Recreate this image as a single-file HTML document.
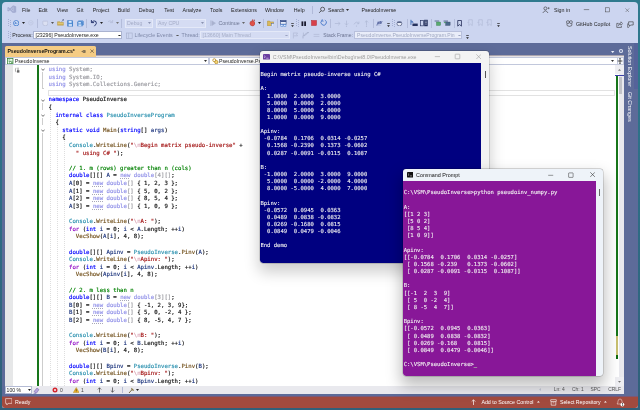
<!DOCTYPE html><html><head><meta charset="utf-8"><title>PseudoInverse</title><style>
*{box-sizing:border-box}
html,body{margin:0;padding:0}
body{width:640px;height:410px;overflow:hidden;position:relative;background:linear-gradient(to bottom,#2f7a8e 0%,#2e6d85 50%,#30607a 100%);font-family:"Liberation Sans",sans-serif;}
div,span.t,svg{position:absolute}
.t{white-space:pre;line-height:8px;font-family:"Liberation Sans",sans-serif;}
.m{font-family:"DejaVu Sans Mono","Liberation Mono",monospace;}
.code{-webkit-text-stroke:0.16px;font-family:"DejaVu Sans Mono","Liberation Mono",monospace;font-size:5.67px;line-height:7.61px;white-space:pre;color:#111;position:absolute;}
.code i{font-style:normal}
.k{color:#0000ff} .l{color:#8f08c4} .y{color:#2b91af} .f{color:#74531f} .s{color:#a31515} .e{color:#dba4b4}
.n{color:#8f8fe8;text-decoration:underline dotted #a8a8b8;text-decoration-thickness:0.5px;text-underline-offset:0.6px} .c{color:#008000} .v{color:#1f377f} .g{color:#9a9aa0} .h{color:#8f8fe8}
.con{-webkit-text-stroke:0.1px;font-family:"DejaVu Sans Mono","Liberation Mono",monospace;white-space:pre;position:absolute;color:#f2f2f2;margin:0}
</style></head><body><div id="root" style="left:0;top:0;width:640px;height:410px;will-change:transform">
<div id="vs" style="left:2px;top:2px;width:636px;height:406px;background:#ccd5f0;border-radius:4px 4px 2px 2px;overflow:hidden"></div>
<div style="left:2px;top:43px;width:636px;height:354px;background:#5d6b99;"></div>
<div style="left:2px;top:396px;width:636px;height:1px;background:#7c5876;"></div>
<div style="left:2px;top:397px;width:636px;height:10.7px;background:#a24a3e;border-radius:0 0 3px 3px;"></div>
<svg style="left:6.6px;top:4.8px" width="10" height="8.6" viewBox="0 0 10 9"><path d="M6.3 0.3 L9.4 1.5 L9.4 7.5 L6.3 8.7 Z M6.6 2.7 L6.6 6.3 L4.3 4.5 Z" fill="#a4add2" fill-rule="evenodd"/><path d="M0.9 2.7 L6.5 7.9 M0.9 6.3 L6.5 1.1" stroke="#a4add2" stroke-width="1.5" fill="none"/><path d="M0.7 2.6 L0.7 6.4" stroke="#a4add2" stroke-width="0.9"/></svg>
<span class="t" style="left:22px;top:6.00px;font-size:5.3px;color:#1e1e1e;">File</span>
<span class="t" style="left:38.4px;top:6.00px;font-size:5.3px;color:#1e1e1e;">Edit</span>
<span class="t" style="left:56.8px;top:6.00px;font-size:5.3px;color:#1e1e1e;">View</span>
<span class="t" style="left:76.6px;top:6.00px;font-size:5.3px;color:#1e1e1e;">Git</span>
<span class="t" style="left:92.7px;top:6.00px;font-size:5.3px;color:#1e1e1e;">Project</span>
<span class="t" style="left:117.8px;top:6.00px;font-size:5.3px;color:#1e1e1e;">Build</span>
<span class="t" style="left:138.7px;top:6.00px;font-size:5.3px;color:#1e1e1e;">Debug</span>
<span class="t" style="left:164.3px;top:6.00px;font-size:5.3px;color:#1e1e1e;">Test</span>
<span class="t" style="left:182.6px;top:6.00px;font-size:5.3px;color:#1e1e1e;">Analyze</span>
<span class="t" style="left:210px;top:6.00px;font-size:5.3px;color:#1e1e1e;">Tools</span>
<span class="t" style="left:231px;top:6.00px;font-size:5.3px;color:#1e1e1e;">Extensions</span>
<span class="t" style="left:265px;top:6.00px;font-size:5.3px;color:#1e1e1e;">Window</span>
<span class="t" style="left:293.7px;top:6.00px;font-size:5.3px;color:#1e1e1e;">Help</span>
<div style="left:312px;top:6px;width:1px;height:8px;background:#b0b9d8;"></div>
<svg style="left:318px;top:6px" width="8" height="8" viewBox="0 0 8 8"><circle cx="4.6" cy="3.2" r="2" fill="none" stroke="#333" stroke-width="0.7"/><path d="M3.2 4.7 L1.2 6.8" stroke="#333" stroke-width="0.8"/></svg>
<span class="t" style="left:328px;top:5.60px;font-size:5.2px;color:#1e1e1e;">Search</span>
<svg style="left:345.50px;top:9.05px" width="3" height="1.9" viewBox="0 0 3 1.9"><polygon points="0,0 3,0 1.5,1.9" fill="#333"/></svg>
<span class="t" style="left:361.5px;top:6.00px;font-size:5.2px;color:#1e1e1e;">PseudoInverse</span>
<svg style="left:542px;top:6px" width="8" height="8" viewBox="0 0 8 8"><circle cx="3.4" cy="2.4" r="1.5" fill="none" stroke="#333" stroke-width="0.6"/><path d="M0.8 7 Q3.4 2.6 6 7" fill="none" stroke="#333" stroke-width="0.6"/><path d="M5.6 2.2 L7.6 2.2 M6.6 1.2 L6.6 3.2" stroke="#333" stroke-width="0.5"/></svg>
<span class="t" style="left:553.9px;top:6.00px;font-size:5.3px;color:#1e1e1e;">Sign in</span>
<svg style="left:582px;top:5px" width="30" height="10" viewBox="0 0 30 10"><path d="M1.8 4.6 L7.2 4.6" stroke="#444" stroke-width="0.55"/><rect x="23.4" y="2.8" width="4.3" height="4.1" fill="none" stroke="#444" stroke-width="0.5"/></svg>
<svg style="left:625.2px;top:7.6px" width="4.6" height="4.6" viewBox="0 0 6 6"><path d="M0.5 0.5 L5.5 5.5 M5.5 0.5 L0.5 5.5" stroke="#444" stroke-width="0.55"/></svg>
<svg style="left:7.5px;top:18.5px" width="3" height="9" viewBox="0 0 3 9"><g fill="#a5afd3"><rect x="0" y="0" width="1" height="1"/><rect x="2" y="1" width="1" height="1"/><rect x="0" y="2" width="1" height="1"/><rect x="2" y="3" width="1" height="1"/><rect x="0" y="4" width="1" height="1"/><rect x="2" y="5" width="1" height="1"/><rect x="0" y="6" width="1" height="1"/><rect x="2" y="7" width="1" height="1"/></g></svg>
<svg style="left:12.8px;top:19.7px" width="6.4" height="6.4" viewBox="0 0 8 8"><circle cx="4" cy="4" r="3.3" fill="#dce8fb" stroke="#3f78cc" stroke-width="1.1"/><path d="M5.8 4 L2.4 4 M3.8 2.6 L2.4 4 L3.8 5.4" stroke="#2a63c0" stroke-width="0.8" fill="none"/></svg>
<svg style="left:22.00px;top:22.15px" width="3" height="1.9" viewBox="0 0 3 1.9"><polygon points="0,0 3,0 1.5,1.9" fill="#222"/></svg>
<svg style="left:28.2px;top:20.2px" width="5.6" height="5.6" viewBox="0 0 8 8"><circle cx="4" cy="4" r="3.2" fill="none" stroke="#bcc4de" stroke-width="0.9"/><path d="M2.4 4 L5.6 4" stroke="#b4bcd8" stroke-width="0.8"/></svg>
<div style="left:37.3px;top:18.5px;width:1px;height:9px;background:#b3bcda;"></div>
<svg style="left:41.6px;top:19.6px" width="6.6" height="6.6" viewBox="0 0 8 8"><path d="M1 2 Q1 0.8 2.4 1.4 L5.6 1.4 Q7 0.8 7 2 L7 4.6 Q7 7 4 7 Q1 7 1 4.6 Z" fill="#dbe0f2" stroke="#b0b8d4" stroke-width="0.7"/></svg>
<svg style="left:51.00px;top:22.15px" width="3" height="1.9" viewBox="0 0 3 1.9"><polygon points="0,0 3,0 1.5,1.9" fill="#555"/></svg>
<svg style="left:56.6px;top:18.8px" width="7.4" height="7" viewBox="0 0 9 8"><path d="M0.6 7.4 L0.6 3 L3.4 3 L4.2 3.8 L7.8 3.8 L7.8 7.4 Z" fill="#d2b458" stroke="#b0903a" stroke-width="0.5"/><path d="M1 5 L7.6 5" stroke="#e8d48c" stroke-width="0.8"/><path d="M5.6 2.8 L8 0.6 M6.6 0.5 L8.2 0.5 L8.2 2" fill="none" stroke="#4a5680" stroke-width="0.7"/></svg>
<svg style="left:66.8px;top:19.9px" width="6.6" height="6.8" viewBox="0 0 8 8"><path d="M0.6 0.6 L6.4 0.6 L7.4 1.6 L7.4 7.4 L0.6 7.4 Z" fill="#4d8ad2" stroke="#3a74c0" stroke-width="0.6"/><rect x="2" y="0.9" width="3.6" height="2.4" fill="#dce9fb"/><rect x="2" y="4.6" width="4" height="2.8" fill="#c4dbf7"/></svg>
<svg style="left:76.6px;top:19.9px" width="7" height="6.8" viewBox="0 0 9 8"><path d="M2 0.5 L7.6 0.5 L8.5 1.4 L8.5 6 L2 6 Z" fill="#6a9fdc" stroke="#4a82c8" stroke-width="0.5"/><path d="M0.5 2 L6 2 L7 3 L7 7.5 L0.5 7.5 Z" fill="#5a92d6" stroke="#3a74c0" stroke-width="0.5"/><rect x="1.8" y="2.3" width="3.2" height="1.8" fill="#dce9fb"/><rect x="1.8" y="5.2" width="3.8" height="2.3" fill="#c4dbf7"/></svg>
<div style="left:86.3px;top:18.5px;width:1px;height:9px;background:#b3bcda;"></div>
<svg style="left:89.5px;top:19px" width="8" height="8" viewBox="0 0 8 8"><path d="M1.4 1 L1.4 3.6 L4 3.6" fill="none" stroke="#1b2a66" stroke-width="0.9"/><path d="M1.6 3.4 Q4 0.6 6 2.6 Q7.4 4.6 4.4 7.2" fill="none" stroke="#1b2a66" stroke-width="0.9"/></svg>
<svg style="left:100.00px;top:22.15px" width="3" height="1.9" viewBox="0 0 3 1.9"><polygon points="0,0 3,0 1.5,1.9" fill="#222"/></svg>
<svg style="left:105.5px;top:19px" width="8" height="8" viewBox="0 0 8 8"><path d="M6.6 1 L6.6 3.6 L4 3.6" fill="none" stroke="#b4bcd8" stroke-width="0.8"/><path d="M6.4 3.4 Q4 0.6 2 2.6" fill="none" stroke="#b4bcd8" stroke-width="0.8"/></svg>
<svg style="left:115.70px;top:22.15px" width="3" height="1.9" viewBox="0 0 3 1.9"><polygon points="0,0 3,0 1.5,1.9" fill="#777"/></svg>
<div style="left:121.2px;top:18.5px;width:1px;height:9px;background:#b3bcda;"></div>
<div style="left:124.5px;top:18.5px;width:28.5px;height:9.4px;background:#d5dcf3;border:1px solid #e4e9f8;"></div>
<span class="t" style="left:127px;top:19.20px;font-size:5.2px;color:#a3abc6;">Debug</span>
<svg style="left:148.00px;top:22.15px" width="3" height="1.9" viewBox="0 0 3 1.9"><polygon points="0,0 3,0 1.5,1.9" fill="#8a92b0"/></svg>
<div style="left:155.5px;top:18.5px;width:50px;height:9.4px;background:#d5dcf3;border:1px solid #e4e9f8;"></div>
<span class="t" style="left:158px;top:19.20px;font-size:5.2px;color:#a3abc6;">Any CPU</span>
<svg style="left:200.50px;top:22.15px" width="3" height="1.9" viewBox="0 0 3 1.9"><polygon points="0,0 3,0 1.5,1.9" fill="#8a92b0"/></svg>
<svg style="left:209.5px;top:19.6px" width="6" height="6.5" viewBox="0 0 6 6.5"><path d="M0.6 0.4 L0.6 6 M1.8 0.8 L5.4 3.2 L1.8 5.6 Z" fill="#a9b2cf" stroke="#a9b2cf" stroke-width="0.6"/></svg>
<span class="t" style="left:218.5px;top:19.20px;font-size:5.3px;color:#6f7894;">Continue</span>
<svg style="left:242.00px;top:22.15px" width="3" height="1.9" viewBox="0 0 3 1.9"><polygon points="0,0 3,0 1.5,1.9" fill="#666"/></svg>
<svg style="left:248.6px;top:19.2px" width="6.8" height="7.6" viewBox="0 0 8 9"><path d="M4.2 0.6 Q4.6 2.2 6.2 3 Q7.6 4.4 6.8 6.4 Q5.8 8.4 3.8 8.2 Q1.2 7.8 1 5.2 Q1 3.4 2.6 2.4 Q2.6 3.6 3.4 3.6 Q3.2 1.8 4.2 0.6Z" fill="#e0524a" stroke="#a02a22" stroke-width="0.5"/><path d="M5.4 0.8 L7.4 1 L6.4 2.4Z" fill="#a02a22"/></svg>
<svg style="left:257.80px;top:22.15px" width="3" height="1.9" viewBox="0 0 3 1.9"><polygon points="0,0 3,0 1.5,1.9" fill="#222"/></svg>
<div style="left:263px;top:18.5px;width:1px;height:9px;background:#b3bcda;"></div>
<svg style="left:266.6px;top:19.6px" width="7.6" height="6.8" viewBox="0 0 9 8"><path d="M0.6 7 L0.6 1.2 L3.2 1.2 L4 2.2 L7.8 2.2 L7.8 7 Z" fill="#d9b95c" stroke="#a8862a" stroke-width="0.5"/><rect x="5" y="4" width="3.4" height="3.4" fill="#dfe7fa" stroke="#40589a" stroke-width="0.5"/></svg>
<div style="left:277px;top:18.5px;width:1px;height:9px;background:#b3bcda;"></div>
<svg style="left:280.4px;top:19.8px" width="6.6" height="7" viewBox="0 0 8 8"><rect x="0.6" y="0.6" width="6.8" height="4.2" fill="#e6edfb" stroke="#28407e" stroke-width="0.7"/><rect x="0.6" y="0.6" width="6.8" height="1.4" fill="#28407e"/><rect x="1" y="5.4" width="2.6" height="2.2" fill="#e6edfb" stroke="#3c79cf" stroke-width="0.6"/><rect x="4.6" y="5.4" width="2.6" height="2.2" fill="#e6edfb" stroke="#3c79cf" stroke-width="0.6"/></svg>
<svg style="left:290.6px;top:23.2px" width="3" height="4.4" viewBox="0 0 3 4.4"><rect x="0.2" y="0" width="2.6" height="0.7" fill="#222"/><polygon points="0.1,2.2 2.9,2.2 1.5,3.9" fill="#222"/></svg>
<svg style="left:295.6px;top:18.5px" width="3" height="9" viewBox="0 0 3 9"><g fill="#a5afd3"><rect x="0" y="0" width="1" height="1"/><rect x="2" y="1" width="1" height="1"/><rect x="0" y="2" width="1" height="1"/><rect x="2" y="3" width="1" height="1"/><rect x="0" y="4" width="1" height="1"/><rect x="2" y="5" width="1" height="1"/><rect x="0" y="6" width="1" height="1"/><rect x="2" y="7" width="1" height="1"/></g></svg>
<svg style="left:301px;top:20.6px" width="6" height="5.6" viewBox="0 0 6 5.6"><rect x="0.5" y="0.4" width="1.8" height="4.8" fill="#1b1b2f"/><rect x="3.2" y="0.4" width="1.8" height="4.8" fill="#1b1b2f"/></svg>
<svg style="left:311px;top:20.4px" width="6" height="6" viewBox="0 0 6 6"><rect x="0.5" y="0.5" width="5" height="5" fill="#d8404a" stroke="#b02830" stroke-width="0.5"/></svg>
<svg style="left:320px;top:19.4px" width="7.2" height="7.2" viewBox="0 0 8 8"><path d="M5.4 1.2 A3 3 0 1 1 2.2 1.6" fill="none" stroke="#2a63c0" stroke-width="0.8"/><path d="M2.6 0.2 L2 2.2 L4 2.4" fill="none" stroke="#2a63c0" stroke-width="0.7"/></svg>
<div style="left:330.3px;top:18.5px;width:1px;height:9px;background:#b3bcda;"></div>
<svg style="left:333.5px;top:19.5px" width="7" height="7" viewBox="0 0 7 7"><path d="M0.8 3.5 L6 3.5 M4.2 1.7 L6 3.5 L4.2 5.3" fill="none" stroke="#aeb7d4" stroke-width="0.7"/></svg>
<svg style="left:343px;top:19.5px" width="7" height="7" viewBox="0 0 7 7"><path d="M3.5 0.6 L3.5 5 M1.9 3.4 L3.5 5 L5.1 3.4" fill="none" stroke="#aeb7d4" stroke-width="0.7"/><circle cx="3.5" cy="6.2" r="0.6" fill="#aeb7d4"/></svg>
<svg style="left:352.5px;top:19.5px" width="7" height="7" viewBox="0 0 7 7"><path d="M1 4.4 Q3.4 0.4 5.8 3.6 M5.9 1.6 L5.9 3.7 L3.9 3.7" fill="none" stroke="#aeb7d4" stroke-width="0.7"/><circle cx="3.5" cy="6" r="0.6" fill="#aeb7d4"/></svg>
<svg style="left:362.5px;top:19.5px" width="7" height="7" viewBox="0 0 7 7"><path d="M3.5 5.2 L3.5 0.8 M1.9 2.4 L3.5 0.8 L5.1 2.4" fill="none" stroke="#aeb7d4" stroke-width="0.7"/><circle cx="3.5" cy="6.2" r="0.6" fill="#aeb7d4"/></svg>
<div style="left:372.8px;top:18.5px;width:1px;height:9px;background:#b3bcda;"></div>
<svg style="left:376.2px;top:19.6px" width="6.8" height="6.8" viewBox="0 0 8 8"><path d="M1 6.4 L2.6 2 L3.4 5 L5 1.2 L5.6 4.6 L7.2 1.2" fill="none" stroke="#3a4a8a" stroke-width="0.8"/><path d="M0.6 7.4 L6 7.4" stroke="#3a4a8a" stroke-width="0.5"/></svg>
<svg style="left:386.5px;top:22.8px" width="3" height="4.4" viewBox="0 0 3 4.4"><rect x="0.2" y="0" width="2.6" height="0.7" fill="#222"/><polygon points="0.1,2.2 2.9,2.2 1.5,3.9" fill="#222"/></svg>
<svg style="left:391.5px;top:18.5px" width="3" height="9" viewBox="0 0 3 9"><g fill="#a5afd3"><rect x="0" y="0" width="1" height="1"/><rect x="2" y="1" width="1" height="1"/><rect x="0" y="2" width="1" height="1"/><rect x="2" y="3" width="1" height="1"/><rect x="0" y="4" width="1" height="1"/><rect x="2" y="5" width="1" height="1"/><rect x="0" y="6" width="1" height="1"/><rect x="2" y="7" width="1" height="1"/></g></svg>
<svg style="left:396.4px;top:19.6px" width="6.8" height="6.8" viewBox="0 0 8 8"><ellipse cx="4" cy="3" rx="3" ry="1.6" fill="#5a6488"/><path d="M1 3.6 Q1 7 4 7 Q7 7 7 3.6" fill="#e8ecf8" stroke="#3a4266" stroke-width="0.7"/></svg>
<div style="left:406.8px;top:18.5px;width:1px;height:9px;background:#b3bcda;"></div>
<svg style="left:409.5px;top:19px" width="8.5" height="8" viewBox="0 0 9 8"><path d="M1 0.6 L1 6" stroke="#1f55a8" stroke-width="0.8"/><path d="M1.6 1.4 L4 3.4 L1.6 3.6Z" fill="#1f55a8"/><rect x="2.6" y="4.6" width="5.6" height="2.6" fill="#26325e"/></svg>
<svg style="left:420px;top:19px" width="8.5" height="8" viewBox="0 0 9 8"><rect x="0.6" y="1.4" width="3" height="5.6" fill="none" stroke="#26325e" stroke-width="0.7"/><rect x="4.4" y="0.6" width="3.8" height="6.8" fill="#26325e"/><path d="M5.2 2 L7.4 2 M5.2 3.6 L7.4 3.6 M5.2 5.2 L7.4 5.2" stroke="#dfe7fa" stroke-width="0.5"/></svg>
<div style="left:430.6px;top:18.5px;width:1px;height:9px;background:#b3bcda;"></div>
<svg style="left:433.5px;top:20px" width="7.4" height="6.4" viewBox="0 0 8 7"><rect x="0.6" y="0.6" width="5" height="1" fill="#5a6a90"/><rect x="2.6" y="2.2" width="4.6" height="3.8" fill="#58aa70" stroke="#3a7a4a" stroke-width="0.4"/></svg>
<svg style="left:442.6px;top:20px" width="8" height="6.4" viewBox="0 0 9 7"><rect x="0.6" y="0.6" width="5" height="1" fill="#4a5a80"/><rect x="3" y="2.2" width="5" height="3.8" fill="#4a6a8a" stroke="#2a3a5a" stroke-width="0.4"/><rect x="1" y="2.4" width="2" height="1" fill="#3e9a56"/></svg>
<div style="left:453.6px;top:18.5px;width:1px;height:9px;background:#b3bcda;"></div>
<svg style="left:457.4px;top:19.8px" width="5.2" height="6.8" viewBox="0 0 6 8"><path d="M0.8 0.6 L5.2 0.6 L5.2 7.2 L3 5.4 L0.8 7.2 Z" fill="none" stroke="#1b2350" stroke-width="0.9"/></svg>
<svg style="left:467px;top:19.4px" width="7" height="7.5" viewBox="0 0 7 8"><path d="M1.6 0.8 L5.4 0.8 L5.4 7 L3.5 5.4 L1.6 7 Z" fill="none" stroke="#b0b9d6" stroke-width="0.7"/><path d="M0 3.6 L2 3.6" stroke="#b0b9d6" stroke-width="0.6"/></svg>
<svg style="left:476.5px;top:19.4px" width="7" height="7.5" viewBox="0 0 7 8"><path d="M1.6 0.8 L5.4 0.8 L5.4 7 L3.5 5.4 L1.6 7 Z" fill="none" stroke="#b0b9d6" stroke-width="0.7"/><path d="M0 3.6 L2 3.6" stroke="#b0b9d6" stroke-width="0.6"/></svg>
<svg style="left:486px;top:19.4px" width="7" height="7.5" viewBox="0 0 7 8"><path d="M1.6 0.8 L5.4 0.8 L5.4 7 L3.5 5.4 L1.6 7 Z" fill="none" stroke="#b0b9d6" stroke-width="0.7"/><path d="M0 3.6 L2 3.6" stroke="#b0b9d6" stroke-width="0.6"/></svg>
<svg style="left:496.5px;top:22.8px" width="3" height="4.4" viewBox="0 0 3 4.4"><rect x="0.2" y="0" width="2.6" height="0.7" fill="#222"/><polygon points="0.1,2.2 2.9,2.2 1.5,3.9" fill="#222"/></svg>
<svg style="left:566px;top:19.6px" width="7" height="7" viewBox="0 0 7 7"><rect x="0.6" y="0.8" width="2.6" height="2.6" rx="0.8" fill="none" stroke="#333" stroke-width="0.6"/><rect x="3.6" y="0.8" width="2.6" height="2.6" rx="0.8" fill="none" stroke="#333" stroke-width="0.6"/><path d="M0.8 3.6 Q0.4 6.4 3.4 6.4 Q6.6 6.4 6 3.6" fill="none" stroke="#333" stroke-width="0.6"/></svg>
<span class="t" style="left:576px;top:19.80px;font-size:5.25px;color:#1e1e1e;">GitHub Copilot</span>
<svg style="left:615.5px;top:20.5px" width="7" height="7" viewBox="0 0 7 7"><path d="M2.6 2.4 L0.8 2.4 L0.8 6.4 L5.4 6.4 L5.4 4.8" fill="none" stroke="#333" stroke-width="0.6"/><path d="M2.4 4.6 Q2.8 2 5 2 L5 0.8 L6.6 2.6 L5 4.2 L5 3.2 Q3.4 3.2 2.4 4.6Z" fill="none" stroke="#333" stroke-width="0.5"/></svg>
<svg style="left:626.5px;top:20.5px" width="7" height="7" viewBox="0 0 7 7"><path d="M1.6 0.8 L6.2 0.8 L6.2 4 L3.6 4 L2.4 5.4 L2.4 4 L1.6 4Z" fill="none" stroke="#333" stroke-width="0.6"/><path d="M0.6 2.4 L0.6 6.4 L2 6.4" fill="none" stroke="#333" stroke-width="0.5"/></svg>
<svg style="left:7.5px;top:31px" width="3" height="9" viewBox="0 0 3 9"><g fill="#a5afd3"><rect x="0" y="0" width="1" height="1"/><rect x="2" y="1" width="1" height="1"/><rect x="0" y="2" width="1" height="1"/><rect x="2" y="3" width="1" height="1"/><rect x="0" y="4" width="1" height="1"/><rect x="2" y="5" width="1" height="1"/><rect x="0" y="6" width="1" height="1"/><rect x="2" y="7" width="1" height="1"/></g></svg>
<span class="t" style="left:12.2px;top:31.40px;font-size:5.25px;color:#1e1e1e;">Process:</span>
<div style="left:33.2px;top:30.8px;width:88.8px;height:8.6px;background:#ffffff;border:0.5px solid #aab3d0;"></div>
<span class="t" style="left:35.5px;top:31.30px;font-size:5.2px;color:#1e1e1e;">[23296] PseudoInverse.exe</span>
<svg style="left:117.50px;top:34.55px" width="3" height="1.9" viewBox="0 0 3 1.9"><polygon points="0,0 3,0 1.5,1.9" fill="#222"/></svg>
<svg style="left:125.5px;top:31.5px" width="7" height="7" viewBox="0 0 7 7"><rect x="0.6" y="1" width="5.6" height="5.4" fill="none" stroke="#a9b2cf" stroke-width="0.7"/><path d="M2.6 1 L2.6 6.4" stroke="#a9b2cf" stroke-width="0.6"/></svg>
<span class="t" style="left:134.5px;top:31.30px;font-size:5.3px;color:#7e88a8;">Lifecycle Events</span>
<svg style="left:175.50px;top:34.55px" width="3" height="1.9" viewBox="0 0 3 1.9"><polygon points="0,0 3,0 1.5,1.9" fill="#555"/></svg>
<span class="t" style="left:181.5px;top:31.30px;font-size:5.25px;color:#7e88a8;">Thread:</span>
<div style="left:200px;top:30.8px;width:89.5px;height:8.6px;background:#d5dcf3;border:1px solid #e4e9f8;"></div>
<span class="t" style="left:202.5px;top:31.30px;font-size:5.25px;color:#a7afc8;">[13660] Main Thread</span>
<svg style="left:285.00px;top:34.55px" width="3" height="1.9" viewBox="0 0 3 1.9"><polygon points="0,0 3,0 1.5,1.9" fill="#9aa2c0"/></svg>
<svg style="left:292px;top:31.8px" width="7" height="7" viewBox="0 0 7 7"><path d="M1.4 0.6 L1.4 6.4 M1.8 1 L5.6 1 L4.6 2.4 L5.6 3.8 L1.8 3.8" fill="none" stroke="#b0b9d6" stroke-width="0.7"/></svg>
<svg style="left:301.5px;top:31.8px" width="8" height="7" viewBox="0 0 8 7"><path d="M1 6.4 L1 3.6 L3 3.6 L3 2 L5 2 L5 0.6 L7 0.6" fill="none" stroke="#a4adca" stroke-width="0.8"/><path d="M1.4 0.6 L1.4 3" stroke="#a4adca" stroke-width="0.6"/></svg>
<svg style="left:312.5px;top:32.5px" width="7" height="6" viewBox="0 0 7 6"><path d="M0.6 1.4 L6.4 1.4 M0.6 3.4 L6.4 3.4" stroke="#b0b9d6" stroke-width="0.7"/></svg>
<span class="t" style="left:323.2px;top:31.30px;font-size:5.0px;color:#6a7290;">Stack Frame:</span>
<div style="left:354.2px;top:30.8px;width:108px;height:8.6px;background:#e9edf9;border:0.6px solid #b8c0dc;"></div>
<span class="t" style="left:357px;top:31.30px;font-size:5.1px;color:#a0a8c2;">PseudoInverse.PseudoInverseProgram.Pin</span>
<svg style="left:458.00px;top:34.55px" width="3" height="1.9" viewBox="0 0 3 1.9"><polygon points="0,0 3,0 1.5,1.9" fill="#9aa2c0"/></svg>
<svg style="left:465.5px;top:35.0px" width="3" height="4.4" viewBox="0 0 3 4.4"><rect x="0.2" y="0" width="2.6" height="0.7" fill="#222"/><polygon points="0.1,2.2 2.9,2.2 1.5,3.9" fill="#222"/></svg>
<div style="left:5px;top:46px;width:91.3px;height:10.8px;background:#f5cc84;border-radius:1.5px 1.5px 0 0;"></div>
<span class="t" style="left:7.4px;top:47.20px;font-size:5.2px;color:#111;font-weight:bold;">PseudoInverseProgram.cs*</span>
<svg style="left:81.2px;top:49px" width="5" height="5" viewBox="0 0 6 6"><path d="M0.6 3 L2.6 3 M2.6 1.4 L2.6 4.6 M2.6 2 L4.6 2 L4.6 4 L2.6 4 M4.8 1.2 L4.8 4.8" stroke="#333" stroke-width="0.6" fill="none"/></svg>
<svg style="left:89.6px;top:49.4px" width="4.2" height="4.2" viewBox="0 0 5 5"><path d="M0.5 0.5 L4.5 4.5 M4.5 0.5 L0.5 4.5" stroke="#4a4030" stroke-width="0.7"/></svg>
<svg style="left:611.30px;top:50.55px" width="3.4" height="2.1" viewBox="0 0 3.4 2.1"><polygon points="0,0 3.4,0 1.7,2.1" fill="#eef1fa"/></svg>
<svg style="left:618px;top:48px" width="6" height="6" viewBox="0 0 6 6"><circle cx="3" cy="3" r="1.5" fill="none" stroke="#dfe4f3" stroke-width="1.1"/></svg>
<span class="t" style="left:625.5px;top:45.5px;font-size:5.35px;color:#fff;writing-mode:vertical-rl;line-height:8px;">Solution Explorer</span>
<span class="t" style="left:625.5px;top:92.3px;font-size:5.35px;color:#fff;writing-mode:vertical-rl;line-height:8px;">Git Changes</span>
<div style="left:634px;top:43px;width:4px;height:46px;background:#55639a;"></div>
<div style="left:96px;top:55px;width:528px;height:1px;background:#aaa4ae;"></div>
<div style="left:96px;top:56px;width:528px;height:1px;background:#e6e2e4;"></div>
<div style="left:5px;top:56.6px;width:619px;height:8.6px;background:#ffffff;"></div>
<div style="left:5px;top:56.6px;width:204px;height:8.6px;background:#fff;border:0.5px solid #c2c8dc;"></div>
<svg style="left:7px;top:57.8px" width="6.5" height="6.5" viewBox="0 0 7 7"><rect x="0.6" y="0.6" width="5.8" height="5.8" fill="#f2fff2" stroke="#2d7d32" stroke-width="0.8"/><path d="M1.6 2 L3.4 2 M1.6 3.5 L5.2 3.5" stroke="#2d7d32" stroke-width="0.6"/><text x="2.2" y="6" font-size="3" fill="#2d7d32" font-family="Liberation Sans,sans-serif" font-weight="bold">C#</text></svg>
<span class="t" style="left:14.8px;top:56.90px;font-size:5.2px;color:#1e1e1e;">PseudoInverse</span>
<svg style="left:203.70px;top:60.05px" width="3" height="1.9" viewBox="0 0 3 1.9"><polygon points="0,0 3,0 1.5,1.9" fill="#333"/></svg>
<div style="left:209px;top:56.6px;width:206px;height:8.6px;background:#fff;border:0.5px solid #c2c8dc;"></div>
<svg style="left:211.5px;top:57.8px" width="7" height="6.5" viewBox="0 0 7 7"><circle cx="2.2" cy="2.4" r="1.6" fill="none" stroke="#b8860b" stroke-width="0.8"/><circle cx="4.4" cy="4.4" r="1.8" fill="#f5d87a" stroke="#a87a10" stroke-width="0.7"/></svg>
<span class="t" style="left:219px;top:56.90px;font-size:5.2px;color:#1e1e1e;">PseudoInverse.PseudoInverseProgram</span>
<div style="left:415px;top:56.6px;width:203px;height:8.6px;background:#fff;border:0.5px solid #c2c8dc;"></div>
<svg style="left:610.90px;top:60.05px" width="3" height="1.9" viewBox="0 0 3 1.9"><polygon points="0,0 3,0 1.5,1.9" fill="#333"/></svg>
<div style="left:617px;top:56.6px;width:7px;height:8.6px;background:#f6f7fb;border:0.5px solid #c2c8dc;"></div>
<svg style="left:617px;top:58px" width="6" height="6" viewBox="0 0 6 6"><path d="M3 0.4 L3 5.6 M0.6 3 L5.4 3" stroke="#2a2a2a" stroke-width="0.8" fill="none"/><path d="M3 0 L3.9 1.1 L2.1 1.1Z M3 6 L3.9 4.9 L2.1 4.9Z" fill="#2a2a2a"/></svg>
<div style="left:5px;top:65.2px;width:619px;height:321px;background:#ffffff;"></div>
<div style="left:5px;top:65.2px;width:7.6px;height:321px;background:#e6e7e8;"></div>
<div style="left:37px;top:65.2px;width:2.4px;height:321px;background:#17751a;"></div>
<div style="left:48px;top:89.6px;width:567px;height:6.4px;background:#fff;border:0.6px solid #e2e2e2;"></div>
<div style="left:619px;top:65.2px;width:5px;height:321px;background:#e9e9ee;"></div>
<div style="left:615px;top:65.2px;width:9px;height:9px;background:#eeeef2;"></div>
<div style="left:615px;top:377px;width:9px;height:9px;background:#eeeef2;"></div>
<svg style="left:618.00px;top:68.90px" width="3" height="1.8" viewBox="0 0 3 1.8"><polygon points="0,1.8 3,1.8 1.5,0" fill="#777"/></svg>
<svg style="left:618.00px;top:380.90px" width="3" height="1.8" viewBox="0 0 3 1.8"><polygon points="0,0 3,0 1.5,1.8" fill="#777"/></svg>
<div style="left:615.3px;top:75px;width:8.5px;height:1px;background:#3a3fa8;"></div>
<div style="left:615.6px;top:76px;width:2.6px;height:260px;background:#17751a;"></div>
<div style="left:615.6px;top:336px;width:2.6px;height:19px;background:#efe9a6;border:0.4px solid #c8c070;"></div>
<div style="left:615.8px;top:355px;width:2.4px;height:3.5px;background:#0e6a0e;"></div>
<div style="left:619.3px;top:77px;width:3px;height:17px;background:#c2c3c9;"></div>
<svg style="left:40.6px;top:68.15px" width="4" height="3.2" viewBox="0 0 4 3.2"><path d="M0.4 0.6 L2 2.4 L3.6 0.6" fill="none" stroke="#3a3a3a" stroke-width="0.7"/></svg>
<svg style="left:40.6px;top:98.59px" width="4" height="3.2" viewBox="0 0 4 3.2"><path d="M0.4 0.6 L2 2.4 L3.6 0.6" fill="none" stroke="#3a3a3a" stroke-width="0.7"/></svg>
<svg style="left:40.6px;top:113.81px" width="4" height="3.2" viewBox="0 0 4 3.2"><path d="M0.4 0.6 L2 2.4 L3.6 0.6" fill="none" stroke="#3a3a3a" stroke-width="0.7"/></svg>
<svg style="left:40.6px;top:129.03px" width="4" height="3.2" viewBox="0 0 4 3.2"><path d="M0.4 0.6 L2 2.4 L3.6 0.6" fill="none" stroke="#3a3a3a" stroke-width="0.7"/></svg>
<div style="left:42.4px;top:72.25px;width:0.5px;height:16.22px;background:#cdcdcd;"></div>
<div style="left:42.4px;top:87.97px;width:2px;height:0.5px;background:#cdcdcd;"></div>
<div style="left:42.4px;top:102.69px;width:0.5px;height:7px;background:#cdcdcd;"></div>
<div style="left:42.4px;top:117.91px;width:0.5px;height:7px;background:#cdcdcd;"></div>
<div style="left:42.4px;top:133.13px;width:0.5px;height:252.87px;background:#cdcdcd;"></div>
<div style="left:50.2px;top:104.00px;width:0;height:282.00px;border-left:0.6px dotted #dedede;"></div>
<div style="left:57.1px;top:119.22px;width:0;height:266.78px;border-left:0.6px dotted #dedede;"></div>
<div style="left:64.0px;top:134.44px;width:0;height:251.56px;border-left:0.6px dotted #dedede;"></div>
<svg style="left:14px;top:66.5px" width="7" height="7" viewBox="0 0 7 7"><path d="M2 0.8 Q0.6 3 2 5.2" fill="none" stroke="#555" stroke-width="0.5"/><path d="M4 0.6 L4 3.4" stroke="#444" stroke-width="0.6"/><rect x="3" y="3.2" width="2.4" height="2.4" fill="#666"/></svg>
<pre class="code" style="left:48.6px;top:65.94px;margin:0;width:566px;height:320.06px;overflow:hidden;letter-spacing:0px"><i class="h">using</i> <i class="g">System;</i>
<i class="h">using</i> <i class="g">System.IO;</i>
<i class="h">using</i> <i class="g">System.Collections.Generic;</i>

<i class="k">namespace</i> PseudoInverse
{
  <i class="k">internal</i> <i class="k">class</i> <i class="y">PseudoInverseProgram</i>
  {
    <i class="k">static</i> <i class="k">void</i> <i class="f">Main</i>(<i class="k">string</i>[] <i class="v">args</i>)
    {
      <i class="y">Console</i>.<i class="f">WriteLine</i>(<i class="s">"</i><i class="e">\n</i><i class="s">Begin matrix pseudo-inverse"</i> +
        <i class="s">" using C# "</i>);

      <i class="c">// 1. m (rows) greater than n (cols)</i>
      <i class="k">double</i>[][] <i class="v">A</i> = <i class="n">new</i><i class="h"> double</i><i class="g">[4][]</i>;
      <i class="v">A</i>[0] = <i class="n">new</i><i class="h"> double</i><i class="g">[]</i> { 1, 2, 3 };
      <i class="v">A</i>[1] = <i class="n">new</i><i class="h"> double</i><i class="g">[]</i> { 5, 0, 2 };
      <i class="v">A</i>[2] = <i class="n">new</i><i class="h"> double</i><i class="g">[]</i> { 8, 5, 4 };
      <i class="v">A</i>[3] = <i class="n">new</i><i class="h"> double</i><i class="g">[]</i> { 1, 0, 9 };

      <i class="y">Console</i>.<i class="f">WriteLine</i>(<i class="s">"</i><i class="e">\n</i><i class="s">A: "</i>);
      <i class="l">for</i> (<i class="k">int</i> <i class="v">i</i> = 0; <i class="v">i</i> &lt; <i class="v">A</i>.Length; ++<i class="v">i</i>)
        <i class="f">VecShow</i>(<i class="v">A</i>[<i class="v">i</i>], 4, 8);

      <i class="k">double</i>[][] <i class="v">Apinv</i> = <i class="y">PseudoInverse</i>.<i class="f">Pinv</i>(<i class="v">A</i>);
      <i class="y">Console</i>.<i class="f">WriteLine</i>(<i class="s">"</i><i class="e">\n</i><i class="s">Apinv: "</i>);
      <i class="l">for</i> (<i class="k">int</i> <i class="v">i</i> = 0; <i class="v">i</i> &lt; <i class="v">Apinv</i>.Length; ++<i class="v">i</i>)
        <i class="f">VecShow</i>(<i class="v">Apinv</i>[<i class="v">i</i>], 4, 8);

      <i class="c">// 2. m less than n</i>
      <i class="k">double</i>[][] <i class="v">B</i> = <i class="n">new</i><i class="h"> double</i><i class="g">[3][]</i>;
      <i class="v">B</i>[0] = <i class="n">new</i><i class="h"> double</i><i class="g">[]</i> { -1, 2, 3, 9};
      <i class="v">B</i>[1] = <i class="n">new</i><i class="h"> double</i><i class="g">[]</i> { 5, 0, -2, 4 };
      <i class="v">B</i>[2] = <i class="n">new</i><i class="h"> double</i><i class="g">[]</i> { 8, -5, 4, 7 };

      <i class="y">Console</i>.<i class="f">WriteLine</i>(<i class="s">"</i><i class="e">\n</i><i class="s">B: "</i>);
      <i class="l">for</i> (<i class="k">int</i> <i class="v">i</i> = 0; <i class="v">i</i> &lt; <i class="v">B</i>.Length; ++<i class="v">i</i>)
        <i class="f">VecShow</i>(<i class="v">B</i>[<i class="v">i</i>], 4, 8);

      <i class="k">double</i>[][] <i class="v">Bpinv</i> = <i class="y">PseudoInverse</i>.<i class="f">Pinv</i>(<i class="v">B</i>);
      <i class="y">Console</i>.<i class="f">WriteLine</i>(<i class="s">"</i><i class="e">\n</i><i class="s">Bpinv: "</i>);
      <i class="l">for</i> (<i class="k">int</i> <i class="v">i</i> = 0; <i class="v">i</i> &lt; <i class="v">Bpinv</i>.Length; ++<i class="v">i</i>)</pre>
<div style="left:5px;top:386px;width:619px;height:8px;background:#e9e9ee;"></div>
<div style="left:5px;top:386.2px;width:26.6px;height:7.4px;background:#ffffff;border:0.5px solid #b4bbd4;"></div>
<span class="t" style="left:6.6px;top:386.00px;font-size:5.1px;color:#1e1e1e;">100 %</span>
<svg style="left:27.50px;top:389.25px" width="3" height="1.9" viewBox="0 0 3 1.9"><polygon points="0,0 3,0 1.5,1.9" fill="#222"/></svg>
<svg style="left:33px;top:386.6px" width="7" height="7" viewBox="0 0 7 7"><path d="M1 4.6 L4 1 L6 2.6 L3.4 6.2Z" fill="#b9a7dc" stroke="#6a5aa8" stroke-width="0.5"/><path d="M0.6 6.4 L3 6.4" stroke="#6a5aa8" stroke-width="0.6"/></svg>
<svg style="left:52px;top:387.2px" width="6" height="6" viewBox="0 0 6 6"><circle cx="3" cy="3" r="2.5" fill="#d3262e"/><path d="M2 2 L4 4 M4 2 L2 4" stroke="#fff" stroke-width="0.7"/></svg>
<span class="t" style="left:60px;top:386.00px;font-size:5px;color:#444;">0</span>
<svg style="left:72.5px;top:387px" width="6.5" height="6" viewBox="0 0 6.5 6"><path d="M3.25 0.5 L6.2 5.6 L0.3 5.6Z" fill="#f0b429" stroke="#a87a10" stroke-width="0.4"/><path d="M3.25 2.2 L3.25 4 M3.25 4.6 L3.25 5.1" stroke="#222" stroke-width="0.6"/></svg>
<span class="t" style="left:81px;top:386.00px;font-size:5px;color:#444;">1</span>
<svg style="left:97px;top:387px" width="5" height="6" viewBox="0 0 5 6"><path d="M2.5 5.6 L2.5 0.8 M0.8 2.5 L2.5 0.8 L4.2 2.5" fill="none" stroke="#333" stroke-width="0.65"/></svg>
<svg style="left:110px;top:387px" width="5" height="6" viewBox="0 0 5 6"><path d="M2.5 0.4 L2.5 5.2 M0.8 3.5 L2.5 5.2 L4.2 3.5" fill="none" stroke="#333" stroke-width="0.65"/></svg>
<div style="left:122px;top:387px;width:0.5px;height:6px;background:#b4bbd4;"></div>
<svg style="left:128px;top:386.8px" width="7" height="7" viewBox="0 0 7 7"><path d="M1 6 L4.4 2.2" stroke="#6b5a2a" stroke-width="0.9"/><path d="M3.6 0.8 L6.2 3.2 L5 4 L3 2Z" fill="#8a7a4a"/></svg>
<svg style="left:136.00px;top:389.25px" width="3" height="1.9" viewBox="0 0 3 1.9"><polygon points="0,0 3,0 1.5,1.9" fill="#222"/></svg>
<span class="t" style="left:553.8px;top:385.90px;font-size:4.9px;color:#555;">Ln: 4</span>
<span class="t" style="left:572px;top:385.90px;font-size:4.9px;color:#555;">Ch: 1</span>
<span class="t" style="left:590.6px;top:385.90px;font-size:4.9px;color:#555;">SPC</span>
<span class="t" style="left:608.3px;top:385.90px;font-size:4.9px;color:#555;">CRLF</span>
<svg style="left:538.5px;top:388.4px" width="2" height="3" viewBox="0 0 2 3"><polygon points="2,0 2,3 0,1.5" fill="#c4c8d6"/></svg>
<svg style="left:4.8px;top:398.2px" width="7.5" height="8" viewBox="0 0 7.5 8"><path d="M0.6 0.6 L6.9 0.6 L6.9 5.4 L3 5.4 L1.8 7 L1.8 5.4 L0.6 5.4Z" fill="none" stroke="#f3d9d2" stroke-width="0.7"/></svg>
<span class="t" style="left:15px;top:398.30px;font-size:5.3px;color:#ffffff;">Ready</span>
<svg style="left:471px;top:399px" width="5" height="6.4" viewBox="0 0 5 6.4"><path d="M2.5 6 L2.5 0.8 M0.7 2.6 L2.5 0.8 L4.3 2.6" fill="none" stroke="#fff" stroke-width="0.7"/></svg>
<span class="t" style="left:481.4px;top:398.30px;font-size:5.3px;color:#ffffff;">Add to Source Control</span>
<svg style="left:536.90px;top:401.40px" width="2.8" height="1.6" viewBox="0 0 2.8 1.6"><polygon points="0,1.6 2.8,1.6 1.4,0" fill="#fff"/></svg>
<svg style="left:550px;top:398.6px" width="7" height="7" viewBox="0 0 7 7"><rect x="0.8" y="0.8" width="5.4" height="1.6" fill="none" stroke="#fff" stroke-width="0.6"/><path d="M1.2 2.6 L1.2 6.2 L5.8 6.2 L5.8 2.6 M2.6 3.8 L4.4 3.8" fill="none" stroke="#fff" stroke-width="0.6"/></svg>
<span class="t" style="left:560px;top:398.30px;font-size:5.2px;color:#ffffff;">Select Repository</span>
<svg style="left:604.00px;top:401.40px" width="2.8" height="1.6" viewBox="0 0 2.8 1.6"><polygon points="0,1.6 2.8,1.6 1.4,0" fill="#fff"/></svg>
<svg style="left:615.5px;top:398px" width="9" height="9" viewBox="0 0 9 9"><path d="M1 6 Q2 5 2 3.2 Q2.2 1 4 1 Q5.8 1 6 3.2 Q6 5 7 6Z" fill="none" stroke="#f3d9d2" stroke-width="0.6"/><circle cx="6.4" cy="6.6" r="1.9" fill="#fff"/><text x="5.7" y="7.9" font-size="3.4" font-weight="bold" fill="#222" font-family="Liberation Sans,sans-serif">1</text></svg>
<div style="left:260px;top:51px;width:229px;height:211.5px;background:#f3f3f3;border-radius:3px;box-shadow:0 8px 15px 1px rgba(0,0,0,0.2),0 0 0.6px 0.4px rgba(0,0,0,0.3);overflow:hidden">
<div style="left:0;top:12px;width:221.3px;height:199.5px;background:#000080;border-radius:0 0 0 3px"></div>
<div style="left:224.6px;top:19.6px;width:0.9px;height:7px;background:#555"></div>
<svg style="left:3.4px;top:3.4px" width="7" height="5.6" viewBox="0 0 7 5.6"><rect x="0" y="0" width="7" height="5.6" rx="0.5" fill="#6b3fa0"/><path d="M1 1.6 L2.4 2.8 L1 4 M3.2 4.2 L5.6 4.2" stroke="#e8dcff" stroke-width="0.6" fill="none"/></svg>
<span class="t" style="left:12.8px;top:2.1px;font-size:5.3px;color:#9b9b9b;">C:\VSM\PseudoInverse\bin\Debug\net8.0\PseudoInverse.exe</span>
<svg style="left:172px;top:0px" width="32" height="12" viewBox="0 0 32 12"><path d="M2.8 5.6 L8 5.6" stroke="#8e8e8e" stroke-width="0.5"/><rect x="23.2" y="3.2" width="4.6" height="4.6" rx="0.5" fill="none" stroke="#8e8e8e" stroke-width="0.5"/></svg>
<svg style="left:215.8px;top:3px" width="5.4" height="5.4" viewBox="0 0 5.4 5.4"><path d="M0.3 0.3 L5.1 5.1 M5.1 0.3 L0.3 5.1" stroke="#999" stroke-width="0.55"/></svg>
<pre class="con" style="left:0.4px;top:20.08px;font-size:5.55px;line-height:7.14px;">Begin matrix pseudo-inverse using C#

A:
  1.0000  2.0000  3.0000
  5.0000  0.0000  2.0000
  8.0000  5.0000  4.0000
  1.0000  0.0000  9.0000

Apinv:
 -0.0784  0.1706  0.0314 -0.0257
  0.1568 -0.2390  0.1373 -0.0602
  0.0287 -0.0091 -0.0115  0.1087

B:
 -1.0000  2.0000  3.0000  9.0000
  5.0000  0.0000 -2.0000  4.0000
  8.0000 -5.0000  4.0000  7.0000

Bpinv:
 -0.0572  0.0945  0.0363
  0.0489  0.0838 -0.0832
  0.0269 -0.1680  0.0815
  0.0849  0.0479 -0.0046

End demo</pre>
</div>
<div style="left:403.4px;top:168.7px;width:199.8px;height:207.6px;background:#eef3f9;border-radius:3px;box-shadow:0 8px 15px 2px rgba(0,0,0,0.26),0 0 0.6px 0.4px rgba(0,0,0,0.3);overflow:hidden">
<div style="left:0;top:12.6px;width:192.2px;height:195px;background:#881798;border-radius:0 0 0 3px"></div>
<div style="left:195.2px;top:20.3px;width:0.9px;height:7.2px;background:#666"></div>
<svg style="left:3.4px;top:3.8px" width="6.6" height="5.4" viewBox="0 0 6.6 5.4"><rect x="0" y="0" width="6.6" height="5.4" rx="0.4" fill="#111"/><path d="M0.9 1.5 L2.1 2.6 L0.9 3.7 M2.9 3.9 L5 3.9" stroke="#ddd" stroke-width="0.55" fill="none"/></svg>
<span class="t" style="left:12.6px;top:2.3px;font-size:5.4px;color:#111;">Command Prompt</span>
<svg style="left:142px;top:0px" width="32" height="12" viewBox="0 0 32 12"><path d="M3.2 6.3 L8.2 6.3" stroke="#333" stroke-width="0.5"/><rect x="23.6" y="3.9" width="4.5" height="4.5" rx="0.4" fill="none" stroke="#333" stroke-width="0.5"/></svg>
<svg style="left:186.2px;top:3.6px" width="5.2" height="5.2" viewBox="0 0 5.2 5.2"><path d="M0.3 0.3 L4.9 4.9 M4.9 0.3 L0.3 4.9" stroke="#333" stroke-width="0.6"/></svg>
<pre class="con" style="left:0.3px;top:20.73px;font-size:5.55px;line-height:7.15px;">C:\VSM\PseudoInverse&gt;python pseudoinv_numpy.py

A:
[[1 2 3]
 [5 0 2]
 [8 5 4]
 [1 0 9]]

Apinv:
[[-0.0784  0.1706  0.0314 -0.0257]
 [ 0.1568 -0.239   0.1373 -0.0602]
 [ 0.0287 -0.0091 -0.0115  0.1087]]

B:
[[-1  2  3  9]
 [ 5  0 -2  4]
 [ 8 -5  4  7]]

Bpinv:
[[-0.0572  0.0945  0.0363]
 [ 0.0489  0.0838 -0.0832]
 [ 0.0269 -0.168   0.0815]
 [ 0.0849  0.0479 -0.0046]]

C:\VSM\PseudoInverse&gt;<i style="color:#b8f0b0;font-style:normal">_</i></pre>
</div>
</div></body></html>
